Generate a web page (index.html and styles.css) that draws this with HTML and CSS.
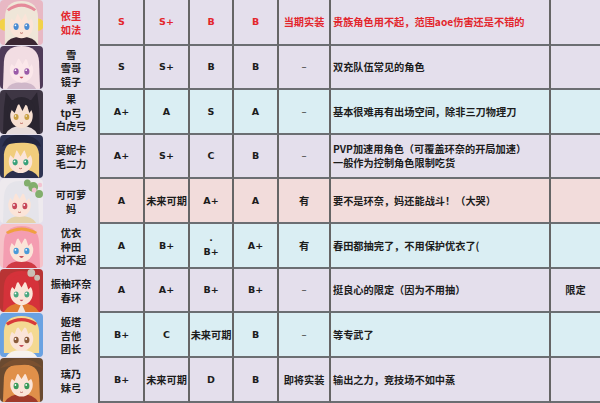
FILE: index.html
```html
<!DOCTYPE html>
<html lang="zh">
<head>
<meta charset="utf-8">
<title>角色评价表</title>
<link rel="stylesheet" href="styles.css">
</head>
<body>
<div class="sheet">

  <!-- row 1 -->
  <div class="pic"><svg class="pt p1" viewBox="0 0 44 44" preserveAspectRatio="none">
    <rect class="bg" width="44" height="44"/>
    <circle class="acc2" cx="5" cy="24" r="6"/><circle class="acc2" cx="39" cy="24" r="6"/>
    <path class="hb" d="M5 44 L5 18 Q5 1 22 1 Q39 1 39 18 L39 44 Z"/>
    <path class="cl" d="M5 44 Q9 36 22 36 Q35 36 39 44 Z"/>
    <ellipse class="face" cx="22" cy="25" rx="12" ry="12.5"/>
    <path class="bang" d="M8 27 Q7 7 22 6 Q37 7 36 27 L33 17 L29 21 L26 13 L22 20 L18 13 L15 21 L11 17 Z"/>
    <path class="acc" d="M7 9 Q22 -2 37 9 L35 11 Q22 2 9 11 Z"/>
    <ellipse class="eye" cx="16.5" cy="26" rx="2.6" ry="3.3"/><ellipse class="eye" cx="27.5" cy="26" rx="2.6" ry="3.3"/>
    <circle class="hl" cx="15.8" cy="24.8" r="0.9"/><circle class="hl" cx="26.8" cy="24.8" r="0.9"/>
    <path class="mouth" d="M20.5 32 Q22 33.2 23.5 32"/>
  </svg></div>
  <div class="name red">依里<br>如法</div>
  <div class="d g red">S</div>
  <div class="d g red">S+</div>
  <div class="d g red">B</div>
  <div class="d g red">B</div>
  <div class="d red">当期实装</div>
  <div class="d txt red">贵族角色用不起，范围aoe伤害还是不错的</div>
  <div class="d"></div>

  <!-- row 2 -->
  <div class="pic"><svg class="pt p2" viewBox="0 0 44 44" preserveAspectRatio="none">
    <rect class="bg" width="44" height="44"/>
    <path class="hb" d="M3 44 L4 16 Q5 0 22 0 Q39 0 40 16 L41 44 Z"/>
    <path class="cl" d="M7 44 Q10 37 22 37 Q34 37 37 44 Z"/>
    <ellipse class="face" cx="22" cy="25" rx="12" ry="12.5"/>
    <path class="bang" d="M8 28 Q6 6 22 5 Q38 6 36 28 L33 18 L30 22 L27 12 L23 19 L19 12 L15 21 L11 18 Z"/>
    <ellipse class="eye" cx="16.5" cy="26" rx="2.6" ry="3.3"/><ellipse class="eye" cx="27.5" cy="26" rx="2.6" ry="3.3"/>
    <circle class="hl" cx="15.8" cy="24.8" r="0.9"/><circle class="hl" cx="26.8" cy="24.8" r="0.9"/>
    <path class="mouthb" d="M20 31.5 Q22 35 24 31.5 Z"/>
  </svg></div>
  <div class="name">雪<br>雪哥<br>镜子</div>
  <div class="d g">S</div>
  <div class="d g">S+</div>
  <div class="d g">B</div>
  <div class="d g">B</div>
  <div class="d dash">–</div>
  <div class="d txt">双充队伍常见的角色</div>
  <div class="d"></div>

  <!-- row 3 -->
  <div class="pic"><svg class="pt p3" viewBox="0 0 44 44" preserveAspectRatio="none">
    <rect class="bg" width="44" height="44"/>
    <path class="hb" d="M6 2 L12 10 L32 10 L38 2 L40 18 L41 44 L3 44 L4 18 Z"/>
    <path class="cl" d="M6 44 Q10 36 22 36 Q34 36 38 44 Z"/>
    <ellipse class="face" cx="22" cy="26" rx="11.5" ry="12"/>
    <path class="bang" d="M8 30 Q6 8 22 7 Q38 8 36 30 L33 19 L30 23 L27 13 L23 21 L19 13 L15 23 L11 19 Z"/>
    <ellipse class="eye" cx="16.5" cy="27" rx="2.5" ry="3"/><ellipse class="eye" cx="27.5" cy="27" rx="2.5" ry="3"/>
    <circle class="hl" cx="15.8" cy="26" r="0.8"/><circle class="hl" cx="26.8" cy="26" r="0.8"/>
    <path class="mouth" d="M20.5 33 Q22 34 23.5 33"/>
  </svg></div>
  <div class="name">果<br>tp弓<br>白虎弓</div>
  <div class="d g blue">A+</div>
  <div class="d g blue">A</div>
  <div class="d g blue">S</div>
  <div class="d g blue">A</div>
  <div class="d dash blue">–</div>
  <div class="d txt blue">基本很难再有出场空间，除非三刀物理刀</div>
  <div class="d blue"></div>

  <!-- row 4 -->
  <div class="pic"><svg class="pt p4" viewBox="0 0 44 44" preserveAspectRatio="none">
    <rect class="bg" width="44" height="44"/>
    <path class="hb" d="M4 44 L4 20 Q5 6 22 6 Q39 6 40 20 L40 44 Z"/>
    <path class="cl" d="M4 44 Q9 35 22 35 Q35 35 40 44 Z"/>
    <ellipse class="face" cx="21" cy="27" rx="12" ry="12"/>
    <path class="bang" d="M7 30 Q6 10 21 9 Q36 10 35 30 L32 20 L28 24 L25 15 L21 22 L17 15 L14 24 L10 20 Z"/>
    <path class="acc" d="M2 12 Q6 -2 24 0 Q40 2 42 12 Q30 7 22 8 Q10 8 2 12 Z"/>
    <ellipse class="eye" cx="15.5" cy="28" rx="2.6" ry="3.1"/><ellipse class="eye" cx="26.5" cy="28" rx="2.6" ry="3.1"/>
    <circle class="hl" cx="14.8" cy="27" r="0.9"/><circle class="hl" cx="25.8" cy="27" r="0.9"/>
    <path class="mouth" d="M19.5 34 Q21 35 22.5 34"/>
  </svg></div>
  <div class="name">莫妮卡<br>毛二力</div>
  <div class="d g">A+</div>
  <div class="d g">S+</div>
  <div class="d g">C</div>
  <div class="d g">B</div>
  <div class="d dash">–</div>
  <div class="d txt">PVP加速用角色（可覆盖环奈的开局加速）<br>一般作为控制角色限制吃货</div>
  <div class="d"></div>

  <!-- row 5 -->
  <div class="pic"><svg class="pt p5" viewBox="0 0 44 44" preserveAspectRatio="none">
    <rect class="bg" width="44" height="44"/>
    <path class="hb" d="M3 44 L4 18 Q5 2 20 2 Q37 2 39 18 L40 44 Z"/>
    <path class="cl" d="M6 44 Q10 37 21 37 Q33 37 37 44 Z"/>
    <ellipse class="face" cx="20" cy="26" rx="11.5" ry="12"/>
    <path class="bang" d="M7 28 Q6 7 20 6 Q34 7 33 28 L31 18 L27 22 L24 13 L20 20 L16 13 L13 22 L10 18 Z"/>
    <circle class="acc" cx="34" cy="8" r="5"/><circle class="acc" cx="40" cy="15" r="4"/><circle class="acc" cx="28" cy="4" r="3.5"/>
    <circle class="acc2" cx="35" cy="11" r="2.5"/><circle class="acc2" cx="41" cy="6" r="2.2"/>
    <ellipse class="eye" cx="15" cy="27" rx="2.5" ry="3.2"/><ellipse class="eye" cx="25.5" cy="27" rx="2.5" ry="3.2"/>
    <circle class="hl" cx="14.3" cy="26" r="0.9"/><circle class="hl" cx="24.8" cy="26" r="0.9"/>
    <path class="mouth" d="M18.5 33 Q20 34 21.5 33"/>
  </svg></div>
  <div class="name">可可萝<br>妈</div>
  <div class="d g pink">A</div>
  <div class="d pink">未来可期</div>
  <div class="d g pink">A+</div>
  <div class="d g pink">A</div>
  <div class="d pink">有</div>
  <div class="d txt pink">要不是环奈，妈还能战斗！（大哭）</div>
  <div class="d pink"></div>

  <!-- row 6 -->
  <div class="pic"><svg class="pt p6" viewBox="0 0 44 44" preserveAspectRatio="none">
    <rect class="bg" width="44" height="44"/>
    <path class="hb" d="M3 44 L4 18 Q5 2 22 2 Q39 2 40 18 L41 44 Z"/>
    <path class="cl" d="M6 44 Q10 37 22 37 Q34 37 38 44 Z"/>
    <ellipse class="face" cx="22" cy="26" rx="12" ry="12"/>
    <path class="bang" d="M8 28 Q7 8 22 7 Q37 8 36 28 L33 18 L29 22 L26 13 L22 20 L18 13 L15 22 L11 18 Z"/>
    <path class="acc" d="M6 8 Q22 -1 38 8 L36 10 Q22 3 8 10 Z"/>
    <ellipse class="eye" cx="16.5" cy="27" rx="2.7" ry="3.3"/><ellipse class="eye" cx="27.5" cy="27" rx="2.7" ry="3.3"/>
    <circle class="hl" cx="15.8" cy="25.8" r="0.9"/><circle class="hl" cx="26.8" cy="25.8" r="0.9"/>
    <path class="mouthb" d="M19.5 32 Q22 36 24.5 32 Z"/>
  </svg></div>
  <div class="name">优衣<br>种田<br>对不起</div>
  <div class="d g blue">A</div>
  <div class="d g blue">B+</div>
  <div class="d g blue"><span class="dot">·<br>B+</span></div>
  <div class="d g blue">A+</div>
  <div class="d blue">有</div>
  <div class="d txt blue">春田都抽完了，不用保护优衣了(</div>
  <div class="d blue"></div>

  <!-- row 7 -->
  <div class="pic"><svg class="pt p7" viewBox="0 0 44 44" preserveAspectRatio="none">
    <rect class="bg" width="44" height="44"/>
    <path class="hb" d="M3 44 L4 18 Q5 2 22 2 Q39 2 40 18 L41 44 Z"/>
    <path class="cl" d="M4 44 Q9 35 22 35 Q35 35 40 44 Z"/>
    <path class="acc2" d="M22 35 L18 44 L26 44 Z"/>
    <ellipse class="face" cx="22" cy="25" rx="11.5" ry="12"/>
    <path class="bang" d="M8 28 Q7 7 22 6 Q37 7 36 28 L33 17 L29 21 L26 12 L22 19 L18 12 L15 21 L11 17 Z"/>
    <circle class="acc" cx="32" cy="4" r="4"/><circle class="acc" cx="38" cy="9" r="3"/>
    <ellipse class="eye" cx="16.5" cy="26" rx="2.5" ry="3.1"/><ellipse class="eye" cx="27.5" cy="26" rx="2.5" ry="3.1"/>
    <circle class="hl" cx="15.8" cy="25" r="0.9"/><circle class="hl" cx="26.8" cy="25" r="0.9"/>
    <path class="mouthb" d="M20 31.5 Q22 34.5 24 31.5 Z"/>
  </svg></div>
  <div class="name">振袖环奈<br>春环</div>
  <div class="d g">A</div>
  <div class="d g">A+</div>
  <div class="d g">B+</div>
  <div class="d g">B+</div>
  <div class="d dash">–</div>
  <div class="d txt">挺良心的限定（因为不用抽）</div>
  <div class="d">限定</div>

  <!-- row 8 -->
  <div class="pic"><svg class="pt p8" viewBox="0 0 44 44" preserveAspectRatio="none">
    <rect class="bg" width="44" height="44"/>
    <path class="hb" d="M4 40 L4 18 Q5 3 22 3 Q39 3 40 18 L40 40 Z"/>
    <path class="cl" d="M6 44 Q10 37 22 37 Q34 37 38 44 Z"/>
    <ellipse class="face" cx="22" cy="26" rx="12" ry="12"/>
    <path class="bang" d="M8 28 Q7 8 22 7 Q37 8 36 28 L33 18 L29 21 L26 13 L22 19 L18 13 L15 21 L11 18 Z"/>
    <path class="acc" d="M6 10 Q22 0 38 10 L36 12.5 Q22 4 8 12.5 Z"/>
    <ellipse class="eye" cx="16.5" cy="27" rx="2.6" ry="3.2"/><ellipse class="eye" cx="27.5" cy="27" rx="2.6" ry="3.2"/>
    <circle class="hl" cx="15.8" cy="26" r="0.9"/><circle class="hl" cx="26.8" cy="26" r="0.9"/>
    <path class="mouthb" d="M19.5 32 Q22 36 24.5 32 Z"/>
  </svg></div>
  <div class="name">姬塔<br>吉他<br>团长</div>
  <div class="d g blue">B+</div>
  <div class="d g blue">C</div>
  <div class="d blue">未来可期</div>
  <div class="d g blue">B</div>
  <div class="d dash blue">–</div>
  <div class="d txt blue">等专武了</div>
  <div class="d blue"></div>

  <!-- row 9 -->
  <div class="pic"><svg class="pt p9" viewBox="0 0 44 44" preserveAspectRatio="none">
    <rect class="bg" width="44" height="44"/>
    <path class="hb" d="M3 44 L4 20 Q5 6 22 6 Q39 6 40 20 L41 44 Z"/>
    <path class="cl" d="M5 44 Q10 36 22 36 Q34 36 39 44 Z"/>
    <ellipse class="face" cx="22" cy="27" rx="11.5" ry="11.5"/>
    <path class="bang" d="M8 29 Q7 10 22 9 Q37 10 36 29 L33 20 L29 23 L26 15 L22 21 L18 15 L15 23 L11 20 Z"/>
    <path class="acc" d="M0 10 Q10 0 22 1 Q36 1 44 10 Q30 6 22 7 Q12 7 0 10 Z"/>
    <ellipse class="eye" cx="16.5" cy="28" rx="2.6" ry="3.2"/><ellipse class="eye" cx="27.5" cy="28" rx="2.6" ry="3.2"/>
    <circle class="hl" cx="15.8" cy="27" r="0.9"/><circle class="hl" cx="26.8" cy="27" r="0.9"/>
    <path class="mouth" d="M20.5 34 Q22 35 23.5 34"/>
  </svg></div>
  <div class="name">璃乃<br>妹弓</div>
  <div class="d g">B+</div>
  <div class="d">未来可期</div>
  <div class="d g">D</div>
  <div class="d g">B</div>
  <div class="d">即将实装</div>
  <div class="d txt">输出之力，竞技场不如中蒸</div>
  <div class="d"></div>

</div>
</body>
</html>
```

FILE: styles.css
```css
html, body {
  margin: 0;
  padding: 0;
  background: #e4dfec;
}

.sheet {
  width: 600px;
  height: 403px;
  display: grid;
  grid-template-columns: 44px 56px 45px 45px 44px 45px 52px 220px 49px;
  grid-template-rows: 46px 44px 45px 44px 45px 45px 44px 45px 45px;
  background: #e4dfec;
  font-family: "Noto Sans CJK SC", "DejaVu Sans", sans-serif;
  font-size: 10.2px;
  line-height: 13.6px;
  font-weight: 700;
  color: #1c1c1c;
}

.pic {
  padding: 0 0 1px 0;
  box-sizing: border-box;
  overflow: hidden;
}

.pt {
  display: block;
  width: 43px;
  height: 100%;
  border-radius: 4px;
}

.name {
  display: flex;
  align-items: center;
  justify-content: center;
  text-align: center;
  box-sizing: border-box;
  border-right: 2px solid #656565;
}

.d {
  display: flex;
  align-items: center;
  justify-content: center;
  text-align: center;
  box-sizing: border-box;
  border-right: 2px solid #656565;
  border-bottom: 2px solid #6b6e72;
  background: #e4dfec;
}

.d:nth-child(9n) {
  border-right: none;
}

.g {
  font-family: "DejaVu Sans", "Liberation Sans", sans-serif;
  font-size: 9.5px;
  font-weight: 700;
}

.dash {
  font-family: "DejaVu Sans", sans-serif;
  font-weight: 400;
  color: #444;
}

.txt {
  justify-content: flex-start;
  text-align: left;
  padding-left: 2px;
}

.dot {
  display: block;
  line-height: 12px;
  padding-top: 1px;
}

.red { color: #e3262c; }
.blue { background: #daeef3; }
.pink { background: #f2dcdb; }

/* portraits */
.bg { fill: var(--bg); }
.hb { fill: var(--hair); }
.bang { fill: var(--hair); }
.face { fill: var(--skin, #fbe4d8); }
.cl { fill: var(--cloth); }
.acc { fill: var(--acc); }
.acc2 { fill: var(--acc2); }
.eye { fill: var(--eye); }
.hl { fill: #ffffff; }
.mouth { fill: none; stroke: #b0504a; stroke-width: 0.8; }
.mouthb { fill: #c8505a; }

.p1 { --bg: #e8b8c4; --hair: #efe6d8; --cloth: #3b2733; --acc: #e58a9a; --acc2: #f2d24a; --eye: #4a8bd2; }
.p2 { --bg: #4e3a58; --hair: #f2dde3; --cloth: #cfb7c9; --eye: #9a5aa8; --skin: #fbe7ea; }
.p3 { --bg: #3e3644; --hair: #2a2530; --cloth: #e6dcdc; --eye: #c9a043; --skin: #f7e0d2; }
.p4 { --bg: #2e3352; --hair: #f1cd7c; --cloth: #2b2f4c; --acc: #23263e; --eye: #3aa07a; }
.p5 { --bg: #eeeaee; --hair: #e5e4ea; --cloth: #e4d2a8; --acc: #82ae6c; --acc2: #f3c3d1; --eye: #c84a5a; }
.p6 { --bg: #f6c2c8; --hair: #f49db1; --cloth: #cf3a44; --acc: #f0a040; --eye: #4a9ad8; }
.p7 { --bg: #b83434; --hair: #d5323a; --cloth: #e07a30; --acc: #c9c0b4; --acc2: #f2e4d8; --eye: #4aa880; }
.p8 { --bg: #6aa2e2; --hair: #f4d992; --cloth: #f6f2ee; --acc: #d83a3a; --eye: #8a5a3a; }
.p9 { --bg: #6a4a30; --hair: #e0904a; --cloth: #a03a2a; --acc: #7a5030; --eye: #3a9a5a; }
```
